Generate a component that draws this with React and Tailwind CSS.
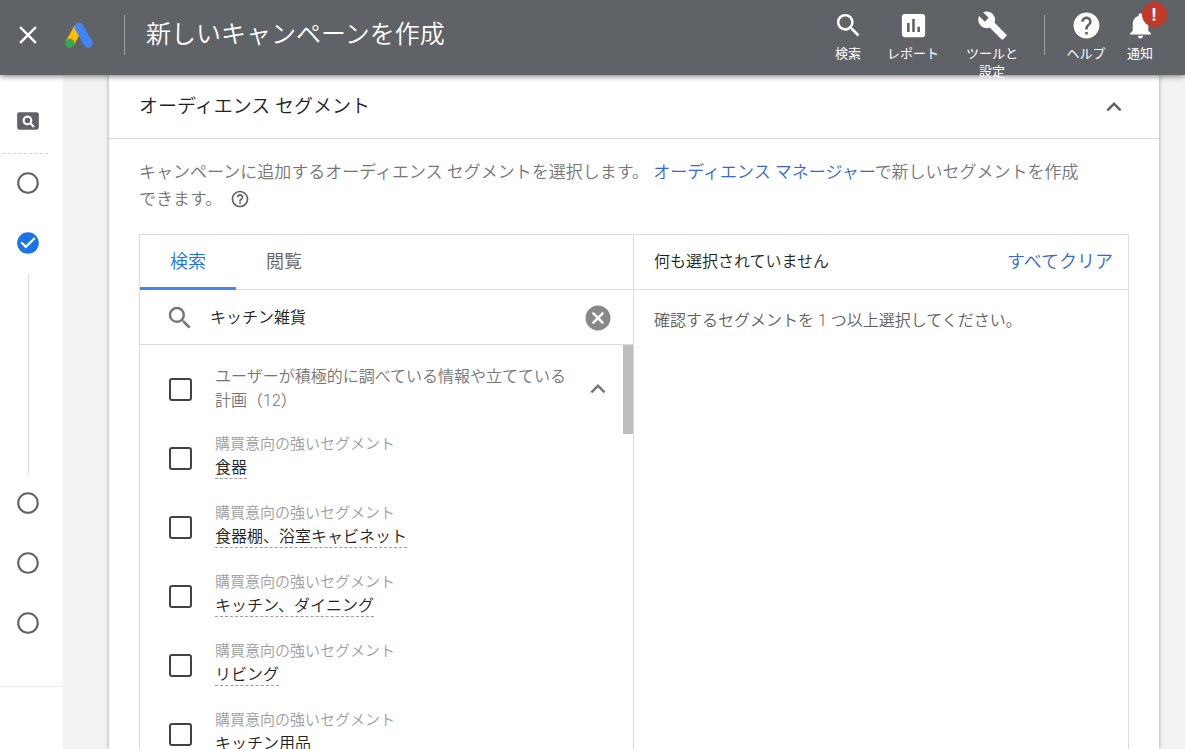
import React from "react";
import {
  MdBuild,
  MdCancel,
  MdCheckCircle,
  MdClose,
  MdExpandLess,
  MdHelp,
  MdHelpOutline,
  MdInsertChart,
  MdNotifications,
  MdPageview,
  MdRadioButtonUnchecked,
  MdSearch,
} from "react-icons/md";

const segments = [
  "食器",
  "食器棚、浴室キャビネット",
  "キッチン、ダイニング",
  "リビング",
  "キッチン用品",
];

const checkboxClass =
  "h-[23px] w-[23px] shrink-0 appearance-none rounded-[3px] border-2 border-[#424242] bg-white checked:bg-[#1a73e8]";

function AdsLogo() {
  return (
    <svg width="28" height="27" viewBox="0 0 28 27" aria-hidden="true">
      <path d="M13.6 5.4 4.9 21" stroke="#fbbc04" strokeWidth="9" />
      <path d="M14 5 23.2 21.3" stroke="#4285f4" strokeWidth="9" strokeLinecap="round" />
      <circle cx="4.7" cy="21.3" r="4.6" fill="#34a853" />
    </svg>
  );
}

function HeaderAction({ icon: Icon, label, width, badge }) {
  return (
    <button type="button" className={`flex flex-col items-center ${width}`}>
      <span className="relative flex h-8 items-center justify-center">
        <Icon size={31} />
        {badge && (
          <span className="absolute -top-[7px] left-[17px] flex h-[25px] w-[25px] items-center justify-center rounded-full bg-[#c53929] text-lg font-bold leading-none">
            {badge}
          </span>
        )}
      </span>
      <span className="mt-1 text-center text-[13px] leading-[18px]">{label}</span>
    </button>
  );
}

function Header() {
  return (
    <header className="relative z-10 flex h-[75px] shrink-0 bg-[#5f6368] text-white shadow-[0_1px_6px_rgba(0,0,0,0.55)]">
      <div className="flex h-[70px] flex-1 items-center pl-[13px]">
        <button type="button" aria-label="閉じる">
          <MdClose size={30} />
        </button>
        <span className="ml-[22px]">
          <AdsLogo />
        </span>
        <span className="ml-[31px] h-10 w-px bg-[#9aa0a6]" />
        <h1 className="ml-[21px] text-[25px] font-[350] leading-8">新しいキャンペーンを作成</h1>
      </div>
      <div className="flex items-start gap-[25px] pr-8 pt-[9px]">
        <HeaderAction icon={MdSearch} label="検索" width="w-[26px]" />
        <HeaderAction icon={MdInsertChart} label="レポート" width="w-[54px]" />
        <HeaderAction icon={MdBuild} label="ツールと設定" width="w-[54px]" />
        <div className="flex items-start gap-[21px]">
          <span className="mt-[6px] h-10 w-px bg-[#9aa0a6]" />
          <HeaderAction icon={MdHelp} label="ヘルプ" width="w-10" />
          <HeaderAction icon={MdNotifications} label="通知" width="w-[26px]" badge="!" />
        </div>
      </div>
    </header>
  );
}

function StepRail() {
  return (
    <nav aria-label="ステップ" className="w-[63px] shrink-0 bg-white pt-[33px] text-[#5f6368]">
      <div className="pl-[15px]">
        <MdPageview size={26} />
      </div>
      <div className="ml-[3px] mr-[15px] mt-[19px] border-t border-dashed border-[#d0d3d6]" />
      <div className="mt-4 flex flex-col gap-[34px] pl-[15px]">
        <MdRadioButtonUnchecked size={26} />
        <MdCheckCircle size={26} className="text-[#1a73e8]" />
      </div>
      <div className="ml-7 mt-[18px] h-[200px] w-px bg-[#dadce0]" />
      <div className="mt-4 flex flex-col gap-[34px] pl-[15px]">
        <MdRadioButtonUnchecked size={26} />
        <MdRadioButtonUnchecked size={26} />
        <MdRadioButtonUnchecked size={26} />
      </div>
      <div className="mt-[50px] border-t border-[#ebebeb]" />
    </nav>
  );
}

function SegmentRow({ name, id }) {
  return (
    <li className="flex h-[69px] items-start pl-[29px] pt-[6px]">
      <input id={id} type="checkbox" className={`mt-4 ${checkboxClass}`} />
      <label htmlFor={id} className="ml-[23px] flex flex-col items-start">
        <span className="text-[15px] font-[350] leading-[26px] text-[#9e9e9e]">
          購買意向の強いセグメント
        </span>
        <span className="border-b border-dashed border-[#9e9e9e] text-base font-[350] leading-[21px] text-[#212121]">
          {name}
        </span>
      </label>
    </li>
  );
}

function SegmentPicker() {
  return (
    <div className="border-x border-t border-[#dadce0]">
      <div role="tablist" className="flex h-[55px] border-b border-[#dadce0] text-lg font-[350]">
        <button
          type="button"
          role="tab"
          aria-selected="true"
          className="-mb-px border-b-[3px] border-[#4285f4] px-[30px] pt-[2px] text-[#1a73e8]"
        >
          検索
        </button>
        <button type="button" role="tab" aria-selected="false" className="px-[30px] text-[#5f6368]">
          閲覧
        </button>
      </div>
      <div className="flex h-[55px] items-center border-b border-[#dadce0] pl-[25px] pr-5 pt-px">
        <MdSearch size={30} className="shrink-0 text-[#757575]" />
        <input
          type="text"
          aria-label="セグメントを検索"
          defaultValue="キッチン雑貨"
          className="ml-[15px] min-w-0 flex-1 text-base font-[350] text-[#212121] outline-none"
        />
        <button type="button" aria-label="検索語句をクリア" className="text-[#888888]">
          <MdCancel size={30} />
        </button>
      </div>
      <div className="flex items-start">
        <div className="min-w-0 flex-1">
          <div className="flex items-center pb-3 pl-[29px] pr-[10px] pt-5">
            <input id="segment-group" type="checkbox" className={checkboxClass} />
            <label
              htmlFor="segment-group"
              className="ml-[23px] mr-[10px] flex-1 text-base font-[350] leading-6 text-[#757575]"
            >
              ユーザーが積極的に調べている情報や立てている計画（12）
            </label>
            <button type="button" aria-label="折りたたむ" className="text-[#757575]">
              <MdExpandLess size={30} />
            </button>
          </div>
          <ul>
            {segments.map((name, i) => (
              <SegmentRow key={name} name={name} id={`segment-${i}`} />
            ))}
          </ul>
        </div>
        <div className="h-[89px] w-[10px] shrink-0 bg-[#bdbdbd]" />
      </div>
    </div>
  );
}

function SelectionSummary() {
  return (
    <div className="border-r border-t border-[#dadce0]">
      <div className="flex h-[55px] items-center justify-between border-b border-[#dadce0] pl-5 pr-[15px]">
        <span className="text-base font-[350] text-[#212121]">何も選択されていません</span>
        <button type="button" className="text-lg font-[350] text-[#3367d6]">
          すべてクリア
        </button>
      </div>
      <p className="px-5 pt-[19px] text-base font-[350] leading-6 text-[#616161]">
        確認するセグメントを 1 つ以上選択してください。
      </p>
    </div>
  );
}

export default function App() {
  return (
    <div className="flex h-screen flex-col overflow-hidden bg-[#f1f3f4] font-['Roboto','Noto_Sans_CJK_JP',sans-serif]">
      <Header />
      <div className="flex min-h-0 flex-1">
        <StepRail />
        <main className="min-w-0 flex-1 pl-[46px] pr-[26px]">
          <section className="h-full overflow-hidden bg-white shadow-[0_0_4px_rgba(0,0,0,0.35)]">
            <div className="flex h-16 items-center justify-between border-b border-[#dadce0] px-[30px]">
              <h2 className="text-[19px] font-[350] leading-7 text-[#212121]">
                オーディエンス セグメント
              </h2>
              <button type="button" aria-label="セクションを折りたたむ" className="text-[#5f6368]">
                <MdExpandLess size={30} />
              </button>
            </div>
            <div className="px-[30px] pt-5">
              <p className="text-[17px] font-[350] leading-[27px] text-[#757575]">
                キャンペーンに追加するオーディエンス セグメントを選択します。{" "}
                <a href="#audience-manager" className="text-[#3367d6]">
                  オーディエンス マネージャー
                </a>
                で新しいセグメントを作成
                <br />
                できます。
                <button type="button" aria-label="ヘルプ" className="ml-2 align-text-bottom text-[#5f6368]">
                  <MdHelpOutline size={20} />
                </button>
              </p>
              <div className="mt-[21px] grid grid-cols-2">
                <SegmentPicker />
                <SelectionSummary />
              </div>
            </div>
          </section>
        </main>
      </div>
    </div>
  );
}
